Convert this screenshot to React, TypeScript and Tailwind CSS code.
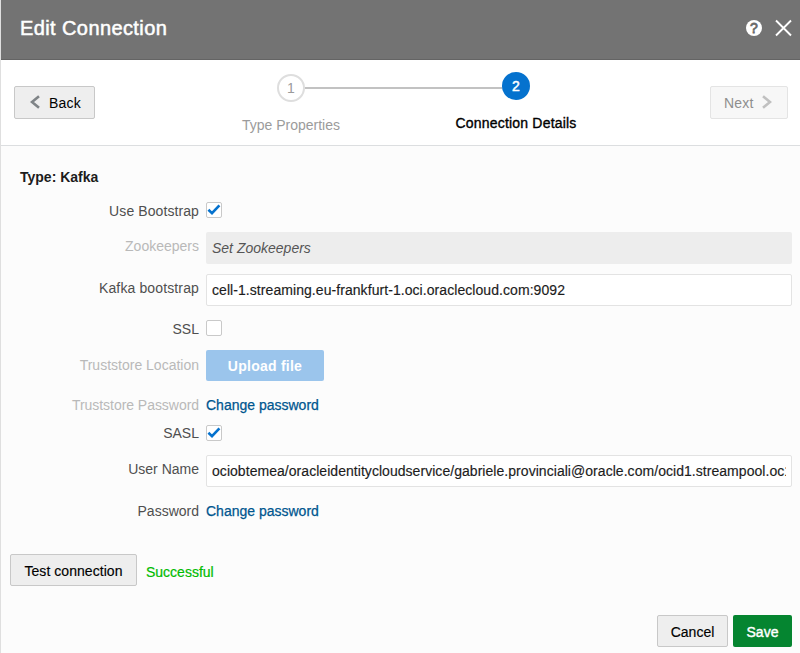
import type { ReactNode } from "react";

function Checkbox({ checked = false }: { checked?: boolean }) {
  return (
    <span
      role="checkbox"
      aria-checked={checked}
      className="flex size-4 items-center justify-center rounded-[2px] border border-[#c9c9c9] bg-white"
    >
      {checked && (
        <svg width="14" height="14" viewBox="0 0 14 14" className="shrink-0" fill="none" stroke="#0572ce" strokeWidth="2.6">
          <path d="M1.4 6.8 5 10.2 12.4 2.4" />
        </svg>
      )}
    </span>
  );
}

type FieldProps = { label: string; className: string; labelClass: string; muted?: boolean; children: ReactNode };

function Field({ label, className, labelClass, muted = false, children }: FieldProps) {
  return (
    <div className={`flex items-start ${className}`}>
      <div className="w-[198px] shrink-0 text-right">
        <span
          className={`block whitespace-nowrap text-[14px] leading-4 ${muted ? "text-[#b9b9b9]" : "text-[#4f4f4f]"} ${labelClass}`}
        >
          {label}
        </span>
      </div>
      <div className="ml-[7px] min-w-0 flex-1">{children}</div>
    </div>
  );
}

function TextValue({ children, className = "" }: { children: ReactNode; className?: string }) {
  return (
    <div className="h-8 rounded-[2px] border border-[#e3e3e3] bg-white px-[5px] pt-[7px]">
      <div className={`overflow-hidden whitespace-nowrap text-[14px] leading-4 text-[#1c1c1c] [-webkit-text-stroke:0.15px_#1c1c1c] ${className}`}>{children}</div>
    </div>
  );
}

export default function App() {
  return (
    <div className="flex h-[653px] w-[800px] flex-col overflow-hidden border-l border-[#dfdfdf] bg-[#fcfcfc] font-['Liberation_Sans',Arial,sans-serif] text-[14px] leading-4 text-black">
      <header className="flex h-[60px] shrink-0 items-start justify-between border-b border-[#646464] bg-[#737373] pr-2 pl-[19px]">
        <h1 className="pt-4 text-[20px] leading-6 tracking-[0.4px] text-white [-webkit-text-stroke:0.5px_white]">Edit Connection</h1>
        <div className="flex items-center gap-[13px] pt-[19px]">
          <span className="flex size-4 items-center justify-center rounded-full bg-white text-[14px] leading-4 text-[#6a6a6a] [-webkit-text-stroke:0.8px_#6a6a6a]">
            ?
          </span>
          <svg width="17" height="18" viewBox="0 0 17 18" fill="none" stroke="white" strokeWidth="1.9">
            <path d="M1 1.5 16 16.5M16 1.5 1 16.5" />
          </svg>
        </div>
      </header>

      <nav className="flex h-[86px] shrink-0 items-start justify-between border-b border-[#dcdee0] bg-white pr-3 pl-[13px]">
        <button className="mt-[26px] flex h-[33px] w-[81px] items-center rounded-[2px] border border-[#c8c8c8] bg-[#eeeeee] pl-[15px]">
          <svg width="10" height="14" viewBox="0 0 10 14" fill="none" stroke="#7f8487" strokeWidth="2.6" className="-mt-[2px]">
            <path d="M9 1.2 2 7 9 12.8" />
          </svg>
          <span className="ml-[9px] tracking-[0.2px]">Back</span>
        </button>
        <ol className="ml-[14px] flex w-[337px] justify-between pt-[12px]">
          <li className="flex w-[100px] flex-col items-center text-[#9b9b9b]">
            <span className="mt-[2px] flex size-7 items-center justify-center rounded-full border-2 border-[#dedede] bg-white">1</span>
            <span className="mt-[15px] whitespace-nowrap">Type Properties</span>
          </li>
          <li className="mt-[15px] -mr-[48px] -ml-[36px] h-[2px] flex-1 bg-[#c2c2c2]" />
          <li className="flex w-[124px] flex-col items-center">
            <span className="z-10 flex size-7 items-center justify-center rounded-full bg-[#0572ce] text-white [-webkit-text-stroke:0.5px_white]">
              2
            </span>
            <span className="mt-[15px] tracking-[0.2px] whitespace-nowrap [-webkit-text-stroke:0.35px_black]">
              Connection Details
            </span>
          </li>
        </ol>
        <button className="mt-[26px] flex h-[33px] w-[78px] items-center rounded-[2px] border border-[#e4e4e4] bg-[#f7f7f7] pl-[13px] text-[#8e8e8e]">
          <span className="tracking-[0.2px]">Next</span>
          <svg width="10" height="14" viewBox="0 0 10 14" fill="none" stroke="#c0c0c0" strokeWidth="2.6" className="-mt-[2px] ml-[8px]">
            <path d="M1 1.2 8 7 1 12.8" />
          </svg>
        </button>
      </nav>

      <main className="flex flex-1 flex-col pr-2">
        <h2 className="mt-[23px] h-4 pl-[19px] text-[14px] leading-4 font-bold text-[#1c1c1c]">Type: Kafka</h2>
        <Field label="Use Bootstrap" className="mt-[17px] h-4" labelClass="pt-px tracking-[0.09px]">
          <Checkbox checked />
        </Field>
        <Field label="Zookeepers" className="mt-[14px] h-8" labelClass="pt-[6px]" muted>
          <div className="h-8 rounded-[2px] bg-[#ededed] pt-2 pl-[6px] text-[#555555] italic">Set Zookeepers</div>
        </Field>
        <Field label="Kafka bootstrap" className="mt-[10px] h-8" labelClass="pt-[6px] tracking-[0.13px]">
          <TextValue className="tracking-[0.065px]">cell-1.streaming.eu-frankfurt-1.oci.oraclecloud.com:9092</TextValue>
        </Field>
        <Field label="SSL" className="mt-[14px] h-4" labelClass="pt-px">
          <Checkbox />
        </Field>
        <Field label="Truststore Location" className="mt-[14px] h-[31px]" labelClass="pt-[7px]" muted>
          <button className="h-[31px] w-[118px] rounded-[2px] bg-[#9bc5ec] font-bold tracking-[0.25px] text-white">Upload file</button>
        </Field>
        <Field label="Truststore Password" className="mt-4 h-4" labelClass="-tracking-[0.04px]" muted>
          <a className="block text-[#00568f] [-webkit-text-stroke:0.25px_#00568f]">Change password</a>
        </Field>
        <Field label="SASL" className="mt-[12px] h-4" labelClass="">
          <Checkbox checked />
        </Field>
        <Field label="User Name" className="mt-[14px] h-8" labelClass="pt-[6px]">
          <TextValue className="tracking-[0.045px]">
            ociobtemea/oracleidentitycloudservice/gabriele.provinciali@oracle.com/ocid1.streampool.oc1
          </TextValue>
        </Field>
        <Field label="Password" className="mt-4 h-4" labelClass="">
          <a className="block text-[#00568f] [-webkit-text-stroke:0.25px_#00568f]">Change password</a>
        </Field>
        <div className="mt-[35px] flex items-center pl-[9px]">
          <button className="h-8 w-[127px] rounded-[2px] border border-[#c8c8c8] bg-[#eeeeee] pt-[2px] tracking-[0.05px] [-webkit-text-stroke:0.15px_black]">
            Test connection
          </button>
          <span className="mt-1 ml-[9px] text-[#00bb00] [-webkit-text-stroke:0.2px_#00bb00]">Successful</span>
        </div>
        <div className="mt-[29px] flex justify-end gap-[5px]">
          <button className="h-8 w-[71px] rounded-[2px] border border-[#c8c8c8] bg-[#eeeeee] pt-px [-webkit-text-stroke:0.15px_black]">Cancel</button>
          <button className="h-8 w-[59px] rounded-[2px] bg-[#058530] pt-px text-white [-webkit-text-stroke:0.4px_white]">Save</button>
        </div>
      </main>
    </div>
  );
}
